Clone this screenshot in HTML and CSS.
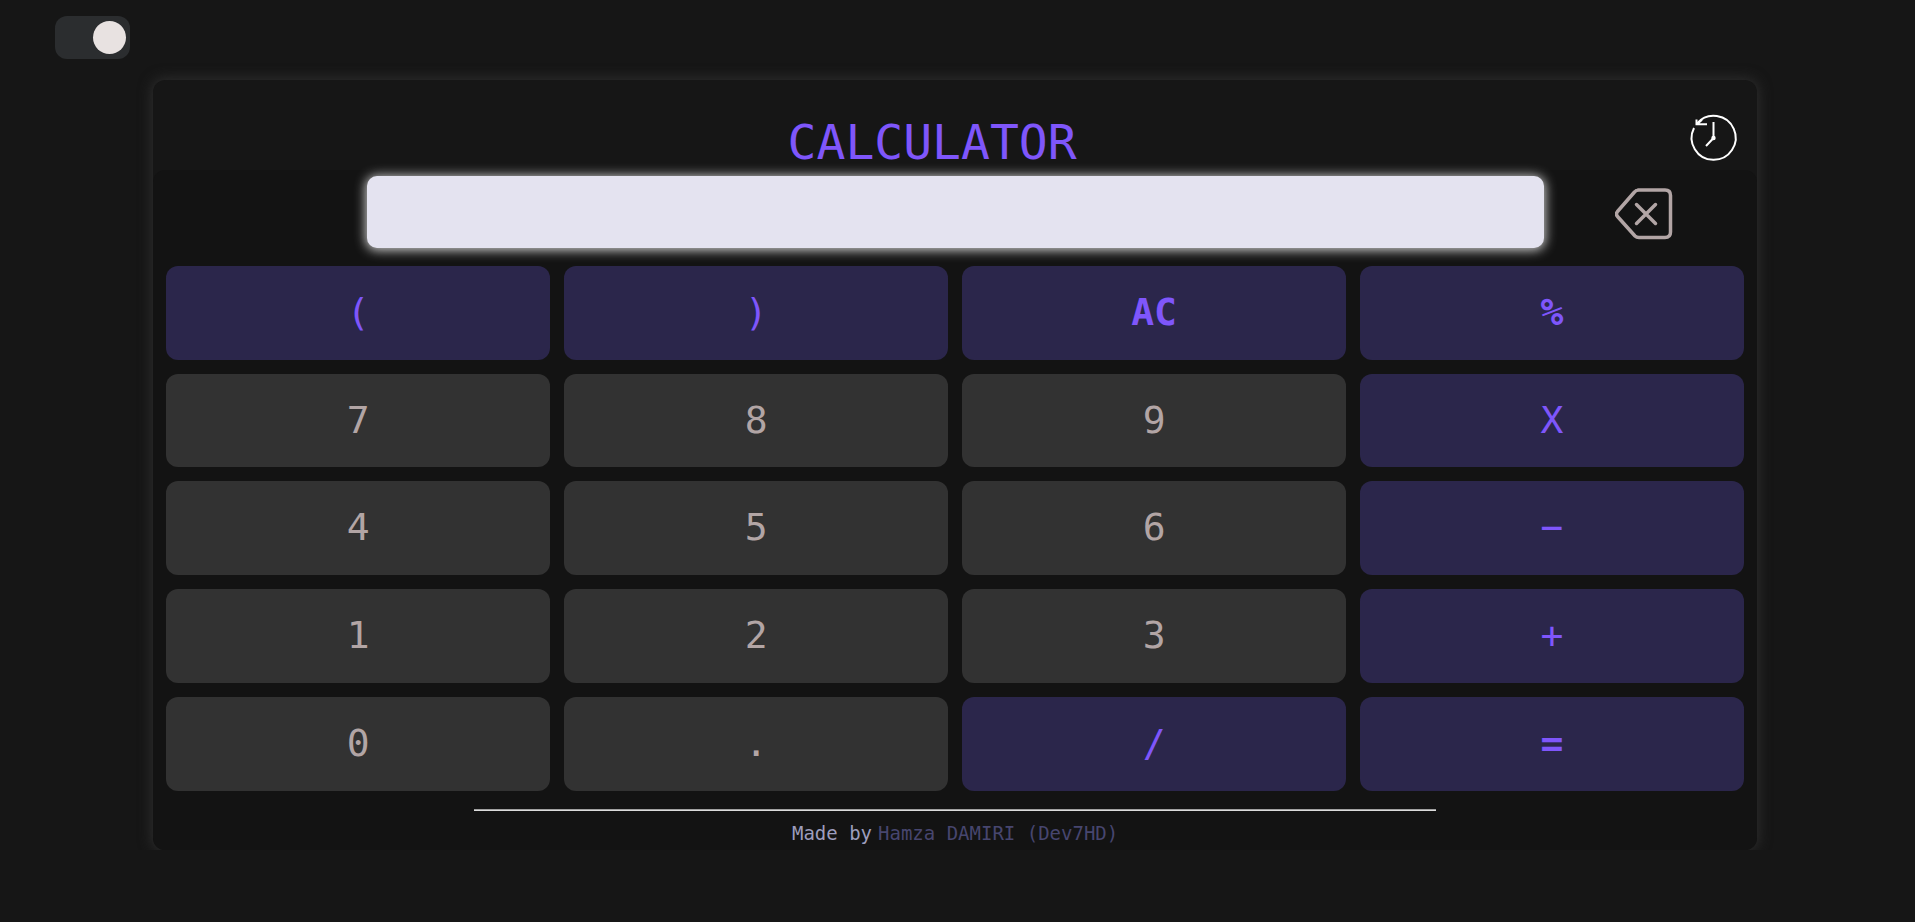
FILE: index.html
```html
<!DOCTYPE html>
<html lang="en">
<head>
<meta charset="utf-8">
<meta name="viewport" content="width=device-width, initial-scale=1">
<title>Calculator</title>
<link rel="stylesheet" href="styles.css">
</head>
<body>
<div class="topbar">
  <input class="theme-toggle" type="checkbox" role="switch" aria-label="Dark theme" checked>
</div>
<main class="calculator">
  <header class="header">
    <h1 class="title">CALCULATOR</h1>
    <button class="icon-button" type="button" aria-label="History">
      <svg class="history-icon" viewBox="0 0 46 46" fill="none" stroke="#ffffff" stroke-width="2">
        <path d="M3 13A22 22 0 1 0 6 8.500"/>
        <path d="M5.500 4.500V9.200H16M6 9.200L11 4.800"/>
        <path d="M22.500 7V23L15 31"/>
        <circle cx="22.500" cy="23" r="1.200" fill="#ffffff"/>
      </svg>
    </button>
  </header>
  <section class="panel">
    <div class="display-row">
      <input class="display" type="text" aria-label="Expression" readonly>
      <button class="icon-button backspace" type="button" aria-label="Backspace">
        <svg class="backspace-icon" viewBox="0 0 58 52" fill="none" stroke="#b2a5a5" stroke-width="3.500" stroke-linecap="round" stroke-linejoin="round">
          <path d="M23 2H50Q55.500 2 55.500 7.500V44Q55.500 49.500 50 49.500H24Q21.500 49.500 20 48L2.500 28.500Q0.500 26 2.500 23.500L19.500 4Q21 2 24 2"/>
          <path d="M21.500 16.500L40.500 35.500M40.500 16.500L21.500 35.500"/>
        </svg>
      </button>
    </div>
    <div class="keys">
      <button class="key operator" type="button">(</button>
      <button class="key operator" type="button">)</button>
      <button class="key operator strong" type="button">AC</button>
      <button class="key operator strong" type="button">%</button>
      <button class="key" type="button">7</button>
      <button class="key" type="button">8</button>
      <button class="key" type="button">9</button>
      <button class="key operator" type="button">X</button>
      <button class="key" type="button">4</button>
      <button class="key" type="button">5</button>
      <button class="key" type="button">6</button>
      <button class="key operator" type="button">−</button>
      <button class="key" type="button">1</button>
      <button class="key" type="button">2</button>
      <button class="key" type="button">3</button>
      <button class="key operator" type="button">+</button>
      <button class="key" type="button">0</button>
      <button class="key" type="button">.</button>
      <button class="key operator" type="button">/</button>
      <button class="key operator strong" type="button">=</button>
    </div>
    <hr class="rule">
    <footer class="footer"><span>Made by</span><a class="author" href="#">Hamza DAMIRI (Dev7HD)</a></footer>
  </section>
</main>
</body>
</html>
```
FILE: styles.css
```css
* {
  box-sizing: border-box;
}

body {
  margin: 0;
  background: #161616;
  color: #b2a5a5;
  font-family: "DejaVu Sans Mono", monospace;
}

.topbar {
  display: flex;
  padding: 16px 55px 21px;
}

.theme-toggle {
  appearance: none;
  display: flex;
  align-items: center;
  justify-content: flex-start;
  width: 75px;
  height: 43px;
  margin: 0;
  padding: 0 4px;
  border-radius: 12px;
  background: #2b2d2f;
  cursor: pointer;
}

.theme-toggle::before {
  content: "";
  width: 33px;
  height: 33px;
  border-radius: 50%;
  background: #e8e2e1;
}

.theme-toggle:checked {
  justify-content: flex-end;
}

.calculator {
  width: 83.75%;
  margin: 0 auto 0 8%;
  border-radius: 12px;
  box-shadow: 0 0 14px 1px #303030;
  background: #161616;
}

.header {
  display: flex;
  align-items: center;
  padding: 34px 20px 0;
}

.title {
  flex: 1;
  margin: 0;
  color: #7f56fb;
  font-size: 48px;
  font-weight: 400;
  line-height: 56px;
  text-align: center;
}

.icon-button {
  display: flex;
  padding: 0;
  border: 0;
  background: none;
  cursor: pointer;
}

.header .icon-button {
  align-self: flex-start;
}

.history-icon {
  width: 46px;
  height: 48px;
  overflow: visible;
}

.panel {
  padding: 6px 13px 5px;
  border-radius: 12px;
  background: #131313;
}

.display-row {
  display: grid;
  grid-template-columns: 1fr 74.6% 1fr;
  align-items: center;
  margin-bottom: 18px;
}

.display {
  grid-column: 2;
  width: 100%;
  height: 72px;
  padding: 0 16px;
  border: 0;
  border-radius: 10px;
  outline: 0;
  background: #e4e3f0;
  box-shadow: 0 1px 12px 1px #d8d8d8;
  color: #2b264b;
  font: inherit;
  font-size: 38px;
  text-align: right;
}

.backspace {
  justify-self: center;
  padding-top: 4px;
}

.backspace-icon {
  width: 58px;
  height: 52px;
}

.keys {
  display: grid;
  grid-template-columns: repeat(4, 1fr);
  grid-auto-rows: 1fr;
  gap: 14px;
  height: 56.9vh;
  min-height: 400px;
}

.key {
  padding: 0 0 2px;
  border: 0;
  border-radius: 12px;
  background: #323232;
  color: #b2a5a5;
  font: inherit;
  font-size: 38px;
  cursor: pointer;
}

.operator {
  background: #2b264b;
  color: #7f56fb;
}

.strong {
  font-weight: 700;
}

.rule {
  width: 61%;
  height: 2px;
  margin: 18px auto 10px;
  border: 0;
  border-top: 1px solid #a0a0a0;
  background: #dcdcdc;
}

.footer {
  display: flex;
  justify-content: center;
  gap: 6px;
  color: #9d9dbd;
  font-size: 19px;
  line-height: 24px;
}

.author {
  color: #47466f;
  text-decoration: none;
}
```
